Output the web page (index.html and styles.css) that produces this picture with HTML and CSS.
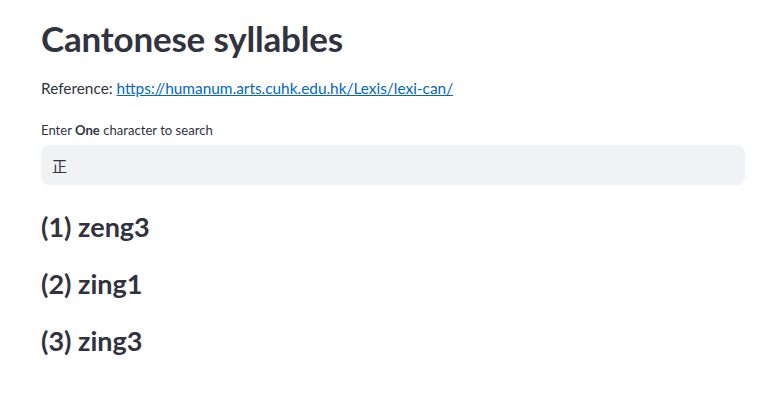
FILE: index.html
```html
<!DOCTYPE html>
<html lang="en">
<head>
<meta charset="utf-8">
<title>Cantonese syllables</title>
<link rel="stylesheet" href="styles.css">
</head>
<body>
<main class="main">
  <h1 class="title">Cantonese syllables</h1>
  <p class="ref">Reference: <a href="https://humanum.arts.cuhk.edu.hk/Lexis/lexi-can/">https://humanum.arts.cuhk.edu.hk/Lexis/lexi-can/</a></p>
  <div class="field">
    <label class="label">Enter <b>One</b> character to search</label>
    <div class="input">正</div>
  </div>
  <h3 class="result">(1) zeng3</h3>
  <h3 class="result">(2) zing1</h3>
  <h3 class="result">(3) zing3</h3>
</main>
</body>
</html>
```
FILE: styles.css
```css
html, body { margin: 0; padding: 0; background: #fff; }
body {
  font-family: "Source Sans Pro", Lato, "Noto Sans", "Noto Sans CJK SC", sans-serif;
  color: #31333f;
}
.main {
  padding: 16px 37px 0 41px;
  display: flex;
  flex-direction: column;
}
.title {
  margin: 0;
  font-size: 35px;
  font-weight: 700;
  line-height: 44px;
  letter-spacing: -0.2px;
}
.ref {
  margin: 17px 0 0;
  font-size: 15.4px;
  line-height: 22px;
}
.ref a { color: #0068c9; }
.field { margin-top: 22px; display: flex; flex-direction: column; gap: 6px; }
.label { font-size: 13.1px; line-height: 18px; }
.label b { font-weight: 700; }
.input {
  height: 40px;
  background: #f0f2f6;
  border-radius: 8px;
  display: flex;
  align-items: center;
  padding-left: 11px;
  font-family: "Noto Sans CJK SC", sans-serif;
  font-size: 15px;
}
.result {
  margin: 0;
  font-size: 27px;
  font-weight: 700;
  line-height: 36px;
}
.result:first-of-type { margin-top: 24px; }
.result + .result { margin-top: 21px; }
```
